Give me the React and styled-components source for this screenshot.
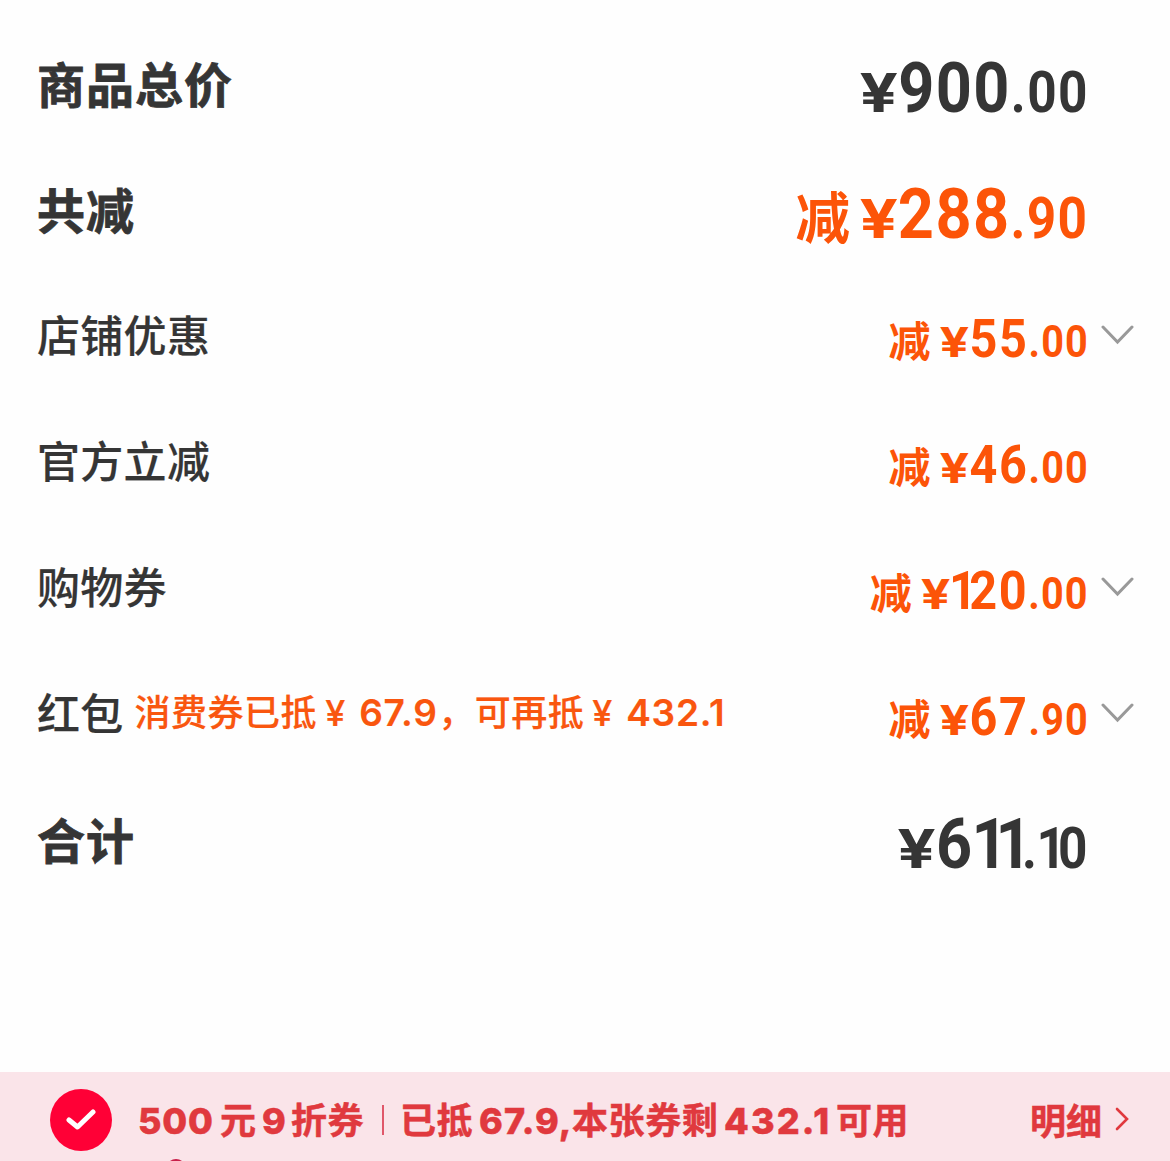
import React from 'react';
import styled, { createGlobalStyle } from 'styled-components';

const GlobalStyle = createGlobalStyle`
  body {
    margin: 0;
    background: #fefefe;
  }
`;

const Page = styled.div`
  display: flex;
  flex-direction: column;
  box-sizing: border-box;
  width: 1170px;
  height: 1161px;
  padding-top: 21px;
  overflow: hidden;
  color: #353535;
  background: #fefefe;
  font-family: 'Noto Sans CJK SC', sans-serif;
`;

const PriceList = styled.div`
  display: flex;
  flex-direction: column;
  flex: 1;
`;

const PriceRow = styled.div`
  display: flex;
  align-items: center;
  height: 126px;
  padding-left: 37px;
`;

const Label = styled.div`
  margin-bottom: ${props => props.$strong ? '5px' : '6px'};
  font-size: ${props => props.$strong ? '48px' : '43px'};
  font-weight: ${props => props.$strong ? 700 : 500};
  letter-spacing: ${props => props.$strong ? '1px' : '0.3px'};
  line-height: 60px;
  white-space: nowrap;
  -webkit-text-stroke: ${props => props.$strong ? '0.8px' : '0.2px'} currentColor;
`;

const Hint = styled.div`
  display: flex;
  align-items: baseline;
  margin: 0 0 5px 11px;
  color: #f9560f;
  font-size: 36px;
  font-weight: 500;
  line-height: 60px;
  letter-spacing: 0.5px;
  white-space: nowrap;
  -webkit-text-stroke: 0.2px currentColor;
`;

const HintNumber = styled.span`
  width: ${props => props.$width}px;
  font-family: Inter, sans-serif;
  font-weight: 600;
  font-size: 37px;
  letter-spacing: 0.8px;
`;

const HintYen = styled.span`
  box-sizing: border-box;
  width: 42px;
  padding-left: 8px;
  font-family: Inter, sans-serif;
  font-weight: 500;
  font-size: 36px;
`;

const Amount = styled.div`
  display: flex;
  align-items: baseline;
  height: 60px;
  margin: ${props => props.$large ? '7px' : '5px'} -1.5px 0 auto;
  line-height: 60px;
  color: ${props => props.$color};
  font-family: Roboto, sans-serif;
  font-weight: 700;
  font-size: ${props => props.$large ? '70px' : '54px'};
  letter-spacing: ${props => props.$large ? '0.022em' : '0.033em'};
  white-space: nowrap;
  transform: scaleX(0.9);
  transform-origin: 100% 50%;
`;

const Minus = styled.span`
  display: inline-block;
  margin-right: 10px;
  font-family: 'Noto Sans CJK SC', sans-serif;
  font-weight: 700;
  font-size: 0.78em;
  letter-spacing: 0;
  transform: scaleX(1.11);
  transform-origin: 100% 50%;
`;

const Yen = styled.span`
  display: inline-block;
  width: 0.81em;
  font-family: Inter, sans-serif;
  font-weight: 700;
  font-size: 0.76em;
  letter-spacing: 0;
  transform: scaleX(1.41);
  transform-origin: 0 50%;
`;

const Fraction = styled.span`
  font-size: 0.815em;
  letter-spacing: 0.027em;
`;

const NarrowOne = styled.span`
  margin-left: -0.035em;
  letter-spacing: -0.155em;
`;

const ArrowSlot = styled.div`
  display: flex;
  justify-content: flex-end;
  box-sizing: border-box;
  width: 83px;
  margin-bottom: 3px;
  padding-right: 36px;
`;

const Banner = styled.div`
  position: relative;
  display: flex;
  align-items: center;
  flex: none;
  box-sizing: border-box;
  height: 89px;
  padding: 7px 41px 0 50px;
  overflow: hidden;
  color: #e0393e;
  background: #fae4e9;
`;

const CheckBadge = styled.div`
  display: flex;
  align-items: center;
  justify-content: center;
  width: 62px;
  height: 62px;
  margin-right: 26px;
  border-radius: 50%;
  background: #ff0036;
`;

const BannerText = styled.div`
  display: flex;
  align-items: baseline;
  margin-bottom: 2px;
  font-size: 36px;
  font-weight: 700;
  line-height: 60px;
  letter-spacing: 0.6px;
  white-space: nowrap;
  -webkit-text-stroke: 0.5px currentColor;
`;

const BannerPart = styled.span`
  width: ${props => props.$width}px;
`;

const BannerNumber = styled(BannerPart)`
  font-family: Inter, sans-serif;
  font-weight: 800;
  letter-spacing: ${props => props.$spacing || 0.8}px;
`;

const Divider = styled.div`
  width: 2px;
  height: 30px;
  margin: 0 16px 0 0;
  background: #e0576a;
`;

const DetailLink = styled.div`
  display: flex;
  align-items: center;
  gap: 13px;
  margin: 0 0 2px auto;
  font-size: 36px;
  font-weight: 700;
  line-height: 60px;
  -webkit-text-stroke: 0.5px currentColor;
`;

const NextBadge = styled.div`
  position: absolute;
  left: 166px;
  top: 87px;
  width: 20px;
  height: 20px;
  border-radius: 50%;
  background: #c9204a;
`;

const DARK = '#353535';
const ORANGE = '#fc5408';

const rows = [
  { label: '商品总价', value: '900.00', large: true, color: DARK },
  { label: '共减', value: '288.90', large: true, minus: true, color: ORANGE },
  { label: '店铺优惠', value: '55.00', minus: true, arrow: true, color: ORANGE },
  { label: '官方立减', value: '46.00', minus: true, color: ORANGE },
  { label: '购物券', value: '120.00', minus: true, arrow: true, color: ORANGE },
  { label: '红包', value: '67.90', minus: true, arrow: true, hint: true, color: ORANGE },
  { label: '合计', value: '611.10', large: true, color: DARK },
];

// The figure 1 is set tighter than the other digits
const renderDigits = (text) =>
  text.split(/(1)/).map((part, i) => (part === '1' ? <NarrowOne key={i}>1</NarrowOne> : part));

const Price = ({ value, large, minus, color }) => {
  const [whole, fraction] = value.split('.');
  return (
    <Amount $large={large} $color={color}>
      {minus && <Minus>减</Minus>}
      <Yen>¥</Yen>
      <span>{renderDigits(whole)}</span>
      <Fraction>.{renderDigits(fraction)}</Fraction>
    </Amount>
  );
};

const ChevronDown = () => (
  <svg width="33" height="20" viewBox="0 0 33 20" fill="none">
    <path d="M2 2L16.5 17L31 2" stroke="#999" strokeWidth="3" strokeLinecap="round" />
  </svg>
);

const RedPacketHint = () => (
  <Hint>
    <span>消费券已抵</span>
    <HintYen>¥</HintYen>
    <HintNumber $width={79}>67.9</HintNumber>
    <span>，可再抵</span>
    <HintYen>¥</HintYen>
    <HintNumber $width={102}>432.1</HintNumber>
  </Hint>
);

const App = () => (
  <>
    <GlobalStyle />
    <Page>
      <PriceList>
        {rows.map((row) => (
          <PriceRow key={row.label}>
            <Label $strong={row.large}>{row.label}</Label>
            {row.hint && <RedPacketHint />}
            <Price {...row} />
            <ArrowSlot>{row.arrow && <ChevronDown />}</ArrowSlot>
          </PriceRow>
        ))}
      </PriceList>
      <Banner>
        <CheckBadge>
          <svg width="30" height="22" viewBox="0 0 30 22" fill="none">
            <path d="M3 11L11.5 18L27 3" stroke="#fff" strokeWidth="5" strokeLinecap="round" strokeLinejoin="round" />
          </svg>
        </CheckBadge>
        <BannerText>
          <BannerNumber $width={82}>500</BannerNumber>
          <BannerPart $width={42}>元</BannerPart>
          <BannerNumber $width={29}>9</BannerNumber>
          <BannerPart $width={91}>折券</BannerPart>
        </BannerText>
        <Divider />
        <BannerText>
          <BannerPart $width={79}>已抵</BannerPart>
          <BannerNumber $width={93} $spacing={1.1}>67.9,</BannerNumber>
          <BannerPart $width={152}>本张券剩</BannerPart>
          <BannerNumber $width={112} $spacing={2.1}>432.1</BannerNumber>
          <BannerPart>可用</BannerPart>
        </BannerText>
        <DetailLink>
          明细
          <svg width="14" height="24" viewBox="0 0 14 24" fill="none">
            <path d="M2 2L12 12L2 22" stroke="#e0393e" strokeWidth="2.6" strokeLinecap="round" />
          </svg>
        </DetailLink>
        <NextBadge />
      </Banner>
    </Page>
  </>
);

export default App;
